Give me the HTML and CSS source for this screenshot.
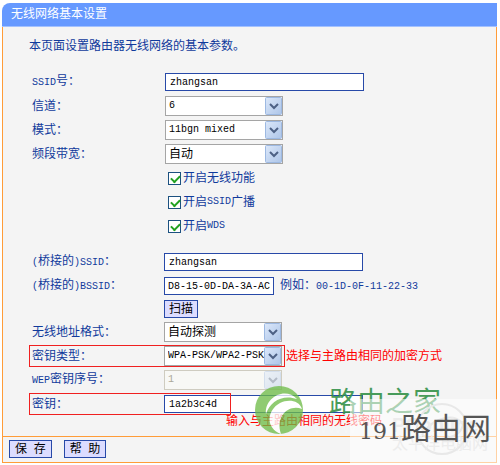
FILE: index.html
```html
<!DOCTYPE html>
<html lang="zh-CN">
<head>
<meta charset="utf-8">
<title>无线网络基本设置</title>
<link rel="stylesheet" href="styles.css">
</head>
<body>
<form class="panel">
  <h1 class="panel-title">无线网络基本设置</h1>
  <div class="panel-body">
    <p class="intro">本页面设置路由器无线网络的基本参数。</p>
    <div class="group">
      <div class="row"><label class="name" for="ssid"><span class="en">SSID</span>号：</label><input class="text" id="ssid" value="zhangsan"></div>
      <div class="row"><label class="name" for="channel">信道：</label><span class="pick"><select class="en" id="channel"><option>6</option></select><svg class="arrow" viewBox="0 0 17 18"><use href="#arrow"/></svg></span></div>
      <div class="row"><label class="name" for="mode">模式：</label><span class="pick"><select class="en" id="mode"><option>11bgn mixed</option></select><svg class="arrow" viewBox="0 0 17 18"><use href="#arrow"/></svg></span></div>
      <div class="row"><label class="name" for="band">频段带宽：</label><span class="pick"><select id="band"><option>自动</option></select><svg class="arrow" viewBox="0 0 17 18"><use href="#arrow"/></svg></span></div>
      <div class="row check-row"><label class="check"><input type="checkbox" checked>开启无线功能</label></div>
      <div class="row check-row"><label class="check"><input type="checkbox" checked>开启<span class="en">SSID</span>广播</label></div>
      <div class="row check-row"><label class="check"><input type="checkbox" checked>开启<span class="en">WDS</span></label></div>
    </div>
    <div class="group bridge">
      <div class="row"><label class="name" for="bssid-name"><span class="en">(</span>桥接的<span class="en">)SSID</span>：</label><input class="text" id="bssid-name" value="zhangsan"></div>
      <div class="row"><label class="name" for="bssid"><span class="en">(</span>桥接的<span class="en">)BSSID</span>：</label><input class="text mac" id="bssid" value="D8-15-0D-DA-3A-AC"><span class="example">例如：<span class="en">00-1D-0F-11-22-33</span></span></div>
      <div class="row scan-row"><button class="btn" type="button">扫描</button></div>
      <div class="row"><label class="name" for="format">无线地址格式：</label><span class="pick"><select id="format"><option>自动探测</option></select><svg class="arrow" viewBox="0 0 17 18"><use href="#arrow"/></svg></span></div>
      <div class="row marked marked-type"><label class="name" for="type">密钥类型：</label><span class="pick"><select class="en" id="type"><option>WPA-PSK/WPA2-PSK</option></select><svg class="arrow" viewBox="0 0 17 18"><use href="#arrow"/></svg></span><span class="note">选择与主路由相同的加密方式</span></div>
      <div class="row"><label class="name" for="wep"><span class="en">WEP</span>密钥序号：</label><span class="pick off"><select class="en" id="wep" disabled><option>1</option></select><svg class="arrow" viewBox="0 0 17 18"><use href="#arrow"/></svg></span></div>
      <div class="row marked marked-key"><label class="name" for="key">密钥：</label><input class="text" id="key" value="1a2b3c4d"></div>
      <p class="note key-note">输入与主路由相同的无线密码</p>
    </div>
  </div>
  <div class="panel-foot">
    <button class="btn" type="button">保&nbsp;&nbsp;存</button>
    <button class="btn" type="button">帮&nbsp;&nbsp;助</button>
  </div>
  <div class="mark-home">
    <svg class="swirl" viewBox="0 0 48 48"><path fill="#6fbd48" d="M24 0a24 24 0 1 0 0 48 24 24 0 0 0 0-48z"/><path fill="#fff" d="M11 28C9 12 30 0 42 13 28 8 15 15 11 28zM26 48C10 42 12 24 25 17c8-4 19-3 22 6C34 18 20 30 26 48z"/></svg>
    <span>路由之家</span>
    <span class="www">www</span>
  </div>
  <div class="mark-net">
    <svg class="globe" viewBox="0 0 56 56"><circle cx="28" cy="28" r="25"/><path d="M8 34C20 14 44 12 49 24C46 38 22 42 8 34"/></svg>
    <span class="maker">PConline</span>
    <span class="maker-cn">太平洋电脑网</span>
    <span class="site"><span class="digits">191</span>路由网</span>
  </div>
</form>
<svg class="defs" aria-hidden="true">
  <defs>
    <linearGradient id="shade" x1="0" y1="0" x2="1" y2="1"><stop offset="0" stop-color="#dce8fa"/><stop offset="1" stop-color="#adc5e8"/></linearGradient>
    <g id="arrow"><rect class="face" x=".5" y=".5" width="16" height="17" rx="1"/><path class="vee" d="M5 7l4 4 4-4"/></g>
  </defs>
</svg>
</body>
</html>
```
FILE: styles.css
```css
* { box-sizing: border-box; }
body {
  margin: 0;
  padding: 3px 3px 2px 2px;
  background: #fff;
  color: #103a9c;
  font: 12px/16px "Liberation Sans", "Noto Sans CJK SC", sans-serif;
}
h1, p { margin: 0; font-size: 12px; font-weight: 400; }
input, select, button { font: inherit; margin: 0; border-radius: 0; }
.defs { position: absolute; width: 0; height: 0; }
.panel { position: relative; margin: 0; }
.panel-title {
  height: 24px;
  padding: 0 9px;
  line-height: 22px;
  color: #fff;
  background: #69f;
  border-bottom: 1px solid #a3c1ff;
  border-top-left-radius: 8px;
}
.panel-body, .panel-foot {
  background: #f4f4f4;
  border: 1px solid #ff9c38;
  border-width: 0 1px 1px;
}
.panel-body { padding: 11px 26px 4px; }
.intro { height: 32px; }
.group { padding-left: 3px; }
.bridge { margin-top: 12px; }
.row { position: relative; display: flex; align-items: center; height: 24px; }
.name { flex: 0 0 133px; white-space: nowrap; }
.bridge .name { flex-basis: 132px; }
.en, .text { font: 10px/16px "Liberation Mono", monospace; }
.text {
  width: 199px;
  height: 18px;
  padding: 0 4px;
  color: #000;
  background: #fff;
  border: 1px solid #2749a8;
}
.mac { width: 110px; padding: 0 3px; }
.example { margin-left: 6px; }
.pick { position: relative; display: block; width: 118px; height: 20px; }
.pick select {
  display: block;
  width: 100%;
  height: 100%;
  padding: 0 0 0 3px;
  appearance: none;
  color: #000;
  background: #fff;
  border: 1px solid #a5a5a5;
  opacity: 1;
}
.arrow { position: absolute; top: 1px; right: 1px; width: 17px; height: 18px; pointer-events: none; }
.face { fill: url(#shade); stroke: #9db9e2; }
.vee { fill: none; stroke: #4d6185; stroke-width: 2; }
.pick.off select { color: #aca899; border-color: #cfccc0; background: #f8f8f5; }
.off .arrow { opacity: .4; }
.check-row { padding-left: 136px; }
.check { display: flex; align-items: center; }
.check input {
  appearance: none;
  width: 13px;
  height: 13px;
  margin-right: 2px;
  background: #fff;
  border: 1px solid #1c5180;
}
.check input:checked::before {
  content: "";
  display: block;
  width: 7px;
  height: 4px;
  margin: 2px;
  border: solid #21a121;
  border-width: 0 0 2px 2px;
  transform: rotate(-45deg);
}
.scan-row { height: 22px; padding-left: 132px; }
.btn {
  height: 18px;
  padding: 0 4px;
  line-height: 14px;
  color: #000;
  background: #dcdcff;
  border: 1px solid #2749a8;
}
.note { color: #f00; white-space: nowrap; }
.pick + .note { margin-left: 4px; }
.marked::before {
  content: "";
  position: absolute;
  z-index: 1;
  left: -3px;
  top: 1px;
  bottom: 1px;
  border: 1px solid #f02020;
  pointer-events: none;
}
.marked-type::before { width: 254px; }
.marked-key::before { width: 200px; }
.key-note { height: 16px; padding-left: 194px; line-height: 10px; }
.panel-foot { display: flex; gap: 12px; padding: 3px 6px 4px; }
.panel-foot .btn { padding: 0 5px; }
.mark-home, .mark-net { position: absolute; pointer-events: none; }
.mark-home {
  top: 383px;
  left: 253px;
  display: flex;
  gap: 26px;
  color: #35924a;
  font-size: 28px;
  line-height: 34px;
  opacity: .9;
}
.swirl { width: 48px; height: 48px; opacity: .85; }
.www { position: absolute; left: 58px; top: 28px; color: #fff; font-size: 20px; line-height: 24px; opacity: .3; }
.mark-net {
  right: 0;
  bottom: 0;
  width: 147px;
  height: 64px;
  overflow: hidden;
  background: rgba(255, 255, 255, .55);
}
.mark-net > * { position: absolute; }
.globe { left: 64px; top: 2px; width: 56px; height: 56px; fill: none; stroke: #e8e8e8; stroke-width: 2; }
.maker { left: 42px; top: 14px; color: #ececec; font-size: 20px; font-weight: 700; line-height: 24px; }
.maker-cn { left: 42px; top: 36px; color: #ececec; font-size: 16px; line-height: 18px; }
.site { left: 9px; top: 14px; color: #555; font-size: 30px; line-height: 32px; white-space: nowrap; }
.digits { font-family: "DejaVu Serif", serif; font-size: 22px; }
```
